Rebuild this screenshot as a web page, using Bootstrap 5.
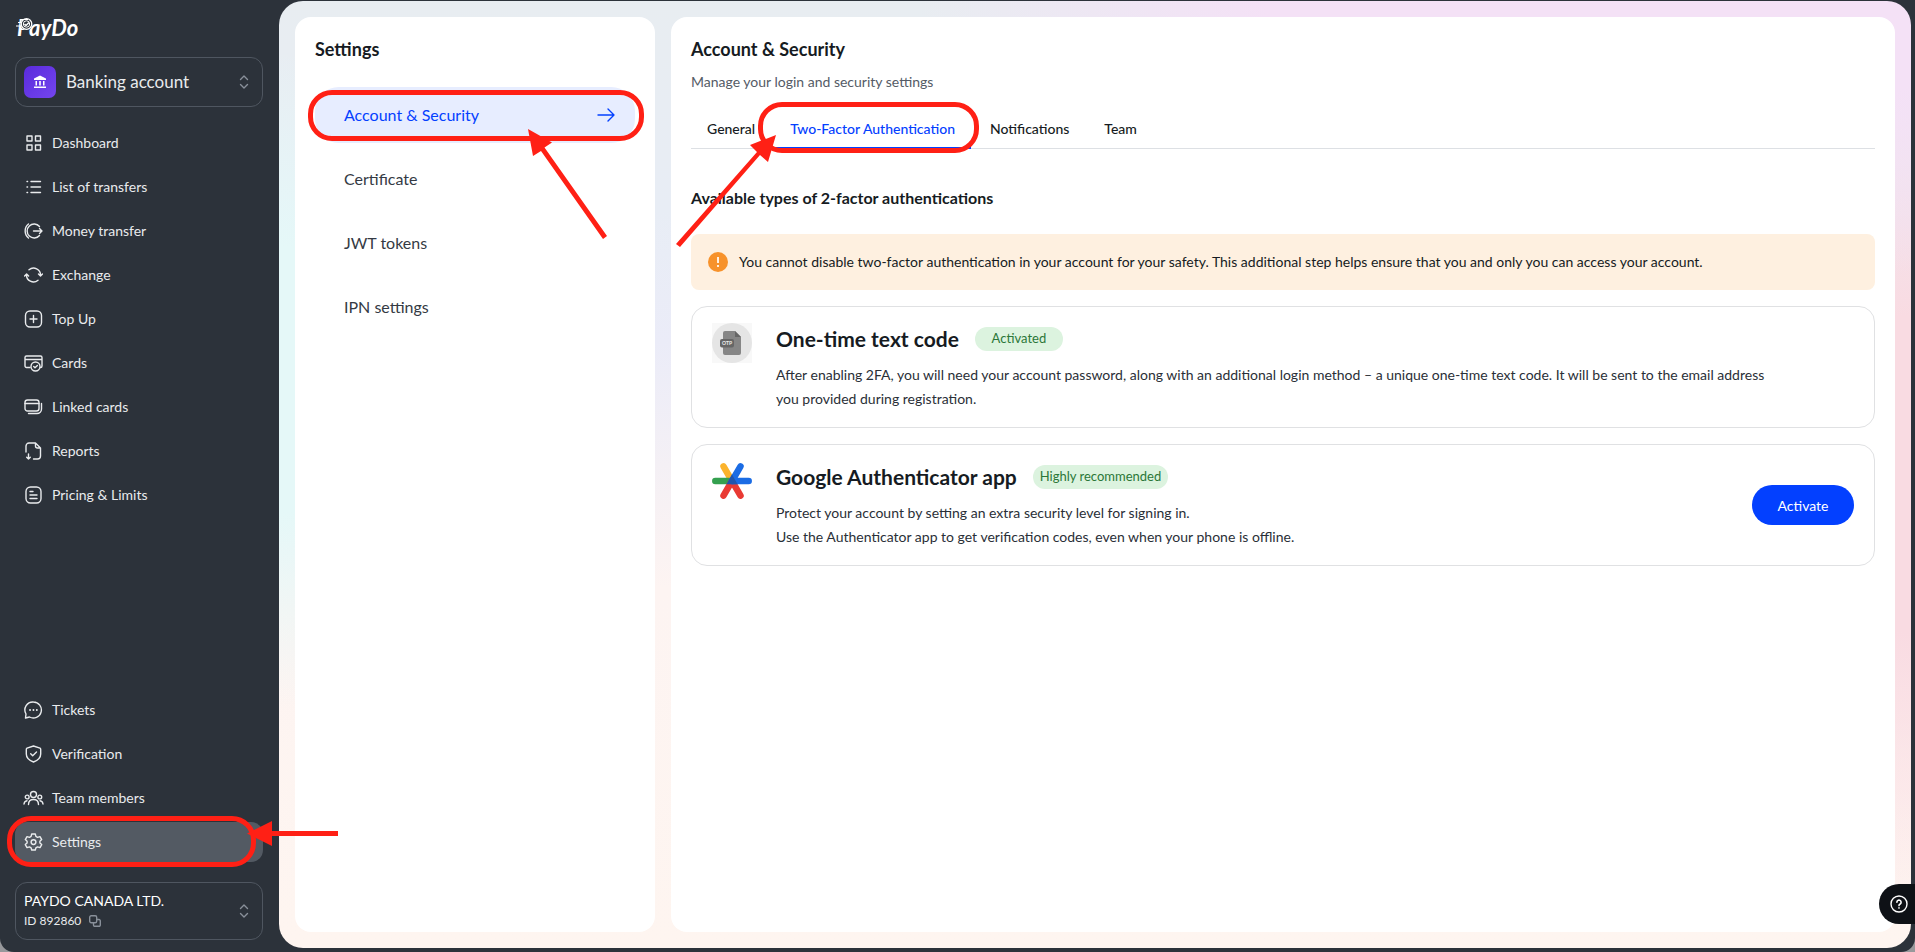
<!DOCTYPE html>
<html lang="en">
<head>
<meta charset="utf-8">
<meta name="viewport" content="width=device-width, initial-scale=1">
<title>PayDo – Account &amp; Security</title>
<link href="https://cdn.jsdelivr.net/npm/bootstrap@5.3.0/dist/css/bootstrap.min.css" rel="stylesheet">
<style>
  :root { --ink: #161b22; --side: #2c323a; --blue: #0340ff; --mark: #ff2015; }
  body { font-family: Lato, "Open Sans", sans-serif; font-size: 14px; line-height: 24px; color: var(--ink); background: #97989b; }
  svg { display: block; flex: none; }
  .line-icon { fill: none; stroke: currentColor; stroke-width: 1.4; stroke-linecap: round; stroke-linejoin: round; }
  .app-frame { background: var(--side); border-radius: 0 0 14px 14px; padding: 1px 4px 4px 0; }

  .side-bar { width: 279px; flex: none; padding: 11px 16px 8px 15px; color: #e9ebed; }
  .brand-logo { margin-bottom: 15px; }
  .switch-box { border: 1px solid #4f5660; border-radius: 12px; background: none; color: inherit; text-align: left; padding: 0 13px 0 8px; gap: 10px; }
  .switch-account { height: 50px; font-size: 17px; margin-bottom: 16px; }
  .switch-company { height: 58px; margin-top: 20px; line-height: 20px; }
  .switch-box .arrows { color: #89909a; }
  .bank-tile { width: 32px; height: 32px; border-radius: 7px; background: linear-gradient(135deg, #5a2bdc, #7445ee); }
  .company-name { color: #fff; }
  .company-id { font-size: 12px; }
  .side-link { height: 40px; margin-bottom: 4px; padding: 0 9px; border-radius: 12px; color: #e9ebed; text-decoration: none; gap: 9px; }
  .side-link:hover { color: #fff; }
  .side-link.active { background: #535a63; }
  .side-foot .side-link:last-child { margin-bottom: 0; }

  .stage { border-radius: 24px; padding: 16px; gap: 16px;
    background:
      radial-gradient(ellipse 700px 300px at 82% 0, #f4e1f6 50%, #f4e1f600 100%),
      radial-gradient(ellipse 500px 450px at 100% 50%, #f9dbe2 35%, #f9dbe200 100%),
      radial-gradient(ellipse 230px 330px at 0 40%, #e5f8f8 40%, #e5f8f800 100%),
      linear-gradient(180deg, #e8edf1 0, #e8edf5 22%, #ebecf8 36%, #fdf4f2 62%, #fef5f0 100%); }
  .panel { background: #fff; border-radius: 16px; padding: 20px; }
  .panel-title { font-size: 18px; line-height: 24px; font-weight: 700; margin: 0; }
  .settings-panel { width: 360px; flex: none; }
  .settings-nav { margin-top: 26px; gap: 8px; }
  .settings-nav a { height: 56px; padding: 0 20px 0 29px; border-radius: 24px; font-size: 16px; color: #343a44; text-decoration: none; }
  .settings-nav a.active { background: #e7edff; color: var(--blue); }

  .sub-title { color: #545b66; margin: 9px 0 0; }
  .tab-row { border-bottom: 1px solid #dde0e4; margin-top: 17px; gap: 3px; }
  .tab-row a { height: 38px; line-height: 36px; padding: 0 16px; font-weight: 500; color: var(--ink); text-decoration: none; margin-bottom: -1px; }
  .tab-row a.active { color: var(--blue); border-bottom: 2px solid var(--blue); }
  .section-title { font-size: 16px; line-height: 24px; font-weight: 700; margin: 37px 0 24px; }
  .safety-note { background: #fef0e0; border-radius: 8px; height: 56px; padding: 0 17px; gap: 11px; margin-bottom: 16px; }
  .method { border: 1px solid #e0e1e3; border-radius: 16px; padding: 16px 20px; min-height: 122px; margin-bottom: 16px; }
  .method-icon { margin-right: 24px; }
  .method h3 { font-size: 21px; line-height: 32px; font-weight: 700; margin: 0; }
  .method p { margin: 8px 0 0; color: #2a2f37; }
  .state-pill { background: #dcf3df; color: #2b7738; border-radius: 12px; height: 24px; line-height: 23px; font-size: 13px; font-weight: 400; padding: 0 7px; min-width: 88px; text-align: center; }
  .btn-activate { --bs-btn-color: #fff; --bs-btn-bg: var(--blue); --bs-btn-hover-color: #fff; --bs-btn-hover-bg: #0234cc; --bs-btn-border-width: 0; border-radius: 20px; height: 40px; width: 102px; font-size: 14px; }
  .help-tab { right: 0; bottom: 28px; width: 36px; height: 40px; border: 0; border-radius: 20px 0 0 20px; background: #0e1116; color: #fff; padding: 0 0 0 11px; }

  /* red call-outs lying over the interface */
  .ring { position: absolute; border: 5px solid var(--mark); border-radius: 24px; pointer-events: none; z-index: 3; }
  .pointer { position: absolute; fill: var(--mark); pointer-events: none; z-index: 3; }
  .ring-side { left: -8px; top: -6px; width: 249px; height: 51px; }
  .pointer-side { left: 232px; top: -1px; }
  .ring-nav { left: -7px; top: 3px; width: 336px; height: 51px; }
  .pointer-nav { left: 213px; top: 42px; }
  .ring-tab { left: -16px; right: -8px; top: -9px; height: 51px; }
  .pointer-tab { left: -99px; top: 24px; }
</style>
</head>
<body>
<div class="app-frame d-flex min-vh-100">

  <aside class="side-bar d-flex flex-column">
    <a href="#" class="brand-logo d-block" aria-label="PayDo">
      <svg width="72" height="30" viewBox="0 0 72 30">
        <text x="2" y="24" fill="#fff" font-family="Lato, sans-serif" font-size="22" font-weight="700" font-style="italic">PayDo</text>
        <circle cx="11.500" cy="12" r="6" fill="#2c323a"/>
        <g fill="none" stroke="#fff"><circle cx="11.500" cy="12" r="5.300" stroke-width="1.300"/><circle cx="11.500" cy="12" r="3.200" stroke-width="1"/><path d="M9.500 12l1.500 1.500 3-3" stroke-width="1.500"/><path d="M6 7.500h7M3 10.500h4M1 14h6" stroke-width="1"/></g>
      </svg>
    </a>

    <button type="button" class="switch-box switch-account d-flex align-items-center w-100">
      <span class="bank-tile d-flex align-items-center justify-content-center">
        <svg width="14" height="14" viewBox="0 0 14 14" fill="#fff"><path d="M7 .5 13 3.500V5H1V3.500zM2.500 6H4v4.500H2.500zM6.200 6h1.600v4.500H6.200zM10 6h1.500v4.500H10zM1 11.600h12V13H1z"/></svg>
      </span>
      <span class="flex-grow-1">Banking account</span>
      <svg class="arrows line-icon" width="10" height="14" viewBox="0 0 10 14"><path d="M1.500 4.500 5 1l3.500 3.500M1.500 9.500 5 13l3.500-3.500"/></svg>
    </button>

    <nav class="d-flex flex-column">
      <a class="side-link d-flex align-items-center" href="#"><svg class="line-icon" width="19" height="18" viewBox="0 0 19 18"><path d="M3 2h5v5H3zM11.500 2h5v5h-5zM3 11h5v5H3zM11.500 11h5v5h-5z"/></svg>Dashboard</a>
      <a class="side-link d-flex align-items-center" href="#"><svg class="line-icon" width="19" height="18" viewBox="0 0 19 18"><path d="M7 3.500h9.500M7 9h9.500M7 14.500h9.500M3 3.500h.6M3 9h.6M3 14.500h.6"/></svg>List of transfers</a>
      <a class="side-link d-flex align-items-center" href="#"><svg class="line-icon" width="19" height="18" viewBox="0 0 19 18"><path d="M15.500 4.500A7 7 0 1 0 15.500 13.500M9.500 9H18M15.500 6.500 18 9l-2.500 2.500M4.500 2A9 9 0 0 0 4.500 16"/></svg>Money transfer</a>
      <a class="side-link d-flex align-items-center" href="#"><svg class="line-icon" width="19" height="18" viewBox="0 0 19 18"><path d="M5 3.700A7 7 0 0 1 16.500 9.500M14.500 8l2 2 2-2M14 14.300A7 7 0 0 1 2.500 8.500M.6 10l2-2 2 2"/></svg>Exchange</a>
      <a class="side-link d-flex align-items-center" href="#"><svg class="line-icon" width="19" height="18" viewBox="0 0 19 18"><rect x="1.500" y="1" width="16" height="16" rx="4.500"/><path d="M9.500 5.500v7M6 9h7"/></svg>Top Up</a>
      <a class="side-link d-flex align-items-center" href="#"><svg class="line-icon" width="19" height="18" viewBox="0 0 19 18"><path d="M6 13.500H2.500A1.500 1.500 0 0 1 1 12V3.500A1.500 1.500 0 0 1 2.500 2h14A1.500 1.500 0 0 1 18 3.500V12a1.500 1.500 0 0 1-1.500 1.500M1 5.500h17"/><circle cx="11.500" cy="12.500" r="4.500"/><path d="m9.700 12.500 1.300 1.300 2.400-2.400"/></svg>Cards</a>
      <a class="side-link d-flex align-items-center" href="#"><svg class="line-icon" width="19" height="18" viewBox="0 0 19 18"><rect x="1" y="2" width="14" height="11" rx="2.500"/><path d="M1 5.500h14M17.500 5.500V11a4.500 4.500 0 0 1-4.500 4.500H4.500"/></svg>Linked cards</a>
      <a class="side-link d-flex align-items-center" href="#"><svg class="line-icon" width="19" height="18" viewBox="0 0 19 18"><path d="M2 10V4a3 3 0 0 1 3-3h6.500L16.500 6v8a3 3 0 0 1-3 3H9.500M11.500 1v3a2 2 0 0 0 2 2h3M4.500 12v5M2.700 15.200l1.800 1.800 1.800-1.800"/></svg>Reports</a>
      <a class="side-link d-flex align-items-center" href="#"><svg class="line-icon" width="19" height="18" viewBox="0 0 19 18"><rect x="2" y="1" width="15" height="16" rx="4.500"/><path d="M6 5.500h3M6 9h7M6 12.500h7"/></svg>Pricing &amp; Limits</a>
    </nav>

    <nav class="side-foot d-flex flex-column mt-auto">
      <a class="side-link d-flex align-items-center" href="#"><svg class="line-icon" width="19" height="18" viewBox="0 0 19 18"><path d="M9.500 1A8 8 0 1 1 5.500 16L1.500 17 2 13A8 8 0 0 1 9.500 1z"/><path d="M6 9h.1M9.400 9h.1M12.800 9h.1" stroke-width="1.800"/></svg>Tickets</a>
      <a class="side-link d-flex align-items-center" href="#"><svg class="line-icon" width="19" height="18" viewBox="0 0 19 18"><path d="M9.500 1 16 3.200C16.500 3.500 16.700 4 16.700 4.500V9c0 4-3.200 6.500-7.200 8-4-1.500-7.200-4-7.200-8V4.500c0-.5.200-1 .7-1.300z"/><path d="m6.700 8.700 2 2L12.500 7"/></svg>Verification</a>
      <a class="side-link d-flex align-items-center" href="#"><svg class="line-icon overflow-visible" width="19" height="18" viewBox="0 0 19 18"><circle cx="9.500" cy="5.500" r="3"/><path d="M4.500 15.500c0-3.500 2-5 5-5s5 1.500 5 5"/><circle cx="3.200" cy="8" r="1.900"/><circle cx="15.800" cy="8" r="1.900"/><path d="M0 15c.2-2 1-3 3-3.300M19 15c-.2-2-1-3-3-3.300"/></svg>Team members</a>
      <a class="side-link active d-flex align-items-center position-relative" href="#" aria-current="page"><svg class="line-icon" width="19" height="18" viewBox="0 0 19 18"><path d="M7.700 1h3.600l.6 2.400 1.600.9L16 3.600l1.700 3-1.800 1.700v1.600l1.800 1.700-1.700 3-2.500-.7-1.600.9-.6 2.200H7.700l-.6-2.200-1.600-.9-2.500.7-1.700-3 1.800-1.700V8.300L1.300 6.600l1.700-3 2.500.7 1.600-.9z"/><circle cx="9.500" cy="9.100" r="2.400"/></svg>Settings
        <span class="ring ring-side"></span>
        <svg class="pointer pointer-side" width="92" height="26" viewBox="0 0 92 26"><path d="M0 12.500 25 0v10h66v5H25v10z"/></svg>
      </a>
    </nav>

    <button type="button" class="switch-box switch-company d-flex align-items-center w-100">
      <span class="flex-grow-1">
        <span class="company-name d-block">PAYDO CANADA LTD.</span>
        <span class="company-id d-flex align-items-center gap-2">ID 892860
          <svg class="line-icon arrows" width="12" height="12" viewBox="0 0 12 12"><rect x=".7" y=".7" width="7" height="7" rx="1.500"/><path d="M8 4.500h2A1.300 1.300 0 0 1 11.300 5.800V10A1.300 1.300 0 0 1 10 11.300H5.800A1.300 1.300 0 0 1 4.500 10V8"/></svg>
        </span>
      </span>
      <svg class="arrows line-icon" width="10" height="14" viewBox="0 0 10 14"><path d="M1.500 4.500 5 1l3.500 3.500M1.500 9.500 5 13l3.500-3.500"/></svg>
    </button>
  </aside>

  <div class="stage d-flex flex-grow-1">
    <section class="panel settings-panel">
      <h1 class="panel-title">Settings</h1>
      <nav class="settings-nav d-flex flex-column">
        <a class="active d-flex align-items-center justify-content-between position-relative" href="#" aria-current="page">Account &amp; Security
          <svg class="line-icon" width="18" height="16" viewBox="0 0 18 16"><path d="M1 8h16M11 2l6 6-6 6"/></svg>
          <span class="ring ring-nav"></span>
          <svg class="pointer pointer-nav" width="80" height="112" viewBox="0 0 80 112"><path d="M0 0 24 13.500 16.500 18.500 79 107 75 110 13 22 5 27z"/></svg>
        </a>
        <a class="d-flex align-items-center" href="#">Certificate</a>
        <a class="d-flex align-items-center" href="#">JWT tokens</a>
        <a class="d-flex align-items-center" href="#">IPN settings</a>
      </nav>
    </section>

    <main class="panel flex-grow-1">
      <h2 class="panel-title">Account &amp; Security</h2>
      <p class="sub-title">Manage your login and security settings</p>
      <nav class="tab-row d-flex">
        <a href="#">General</a>
        <a href="#" class="active position-relative" aria-current="page">Two-Factor Authentication
          <span class="ring ring-tab"></span>
          <svg class="pointer pointer-tab" width="102" height="113" viewBox="0 0 102 113"><path d="M101 0 75 10 82 17 1 109 5 112 85 20 93 27z"/></svg>
        </a>
        <a href="#">Notifications</a>
        <a href="#">Team</a>
      </nav>

      <h3 class="section-title">Available types of 2-factor authentications</h3>
      <div class="safety-note d-flex align-items-center">
        <svg width="20" height="20" viewBox="0 0 20 20"><circle cx="10" cy="10" r="10" fill="#f7922b"/><path d="M10 5v6M10 13v2" stroke="#fff0e0" stroke-width="2" fill="none"/></svg>
        <span>You cannot disable two-factor authentication in your account for your safety. This additional step helps ensure that you and only you can access your account.</span>
      </div>

      <article class="method d-flex">
        <svg class="method-icon" width="40" height="40" viewBox="0 0 40 40"><path fill="#f8f8f8" d="M0 0h40v40H0z"/><circle cx="20" cy="20" r="20" fill="#e5e5e5"/><path fill="#868686" d="M13 8h10l6 6v16a2 2 0 0 1-2 2H13a2 2 0 0 1-2-2V10a2 2 0 0 1 2-2z"/><path fill="#666" d="M23 8l6 6h-6z"/><rect x="8" y="16" width="14" height="8.500" rx="2" fill="#666"/><text x="15" y="22" text-anchor="middle" font-family="Lato, sans-serif" font-size="5" font-weight="700" fill="#eee">OTP</text></svg>
        <div class="flex-grow-1 me-5">
          <div class="d-flex align-items-center gap-3">
            <h3>One-time text code</h3><span class="state-pill">Activated</span>
          </div>
          <p>After enabling 2FA, you will need your account password, along with an additional login method – a unique one-time text code. It will be sent to the email address<br>you provided during registration.</p>
        </div>
      </article>

      <article class="method d-flex">
        <svg class="method-icon" width="40" height="40" viewBox="0 0 40 40" stroke-width="6.500" stroke-linecap="round">
          <path d="M20 20 11.500 5.300" stroke="#fbb32c"/><path d="M20 20 3.300 20" stroke="#34a04f"/>
          <path d="M20 20 11.500 34.700M20 20 28.500 34.700" stroke="#e93a33"/><path d="M20 20 28.500 5.300M20 20h16.700" stroke="#1b6ce4"/>
          <path d="M20 13.500 25.600 23.200H14.400z" fill="#2055ad"/>
        </svg>
        <div class="flex-grow-1 me-4">
          <div class="d-flex align-items-center gap-3">
            <h3>Google Authenticator app</h3><span class="state-pill">Highly recommended</span>
          </div>
          <p>Protect your account by setting an extra security level for signing in.<br>Use the Authenticator app to get verification codes, even when your phone is offline.</p>
        </div>
        <button type="button" class="btn btn-activate align-self-center">Activate</button>
      </article>
    </main>
  </div>
</div>

<button type="button" class="help-tab position-fixed d-flex align-items-center" aria-label="Help">
  <svg class="line-icon" width="18" height="18" viewBox="0 0 18 18"><circle cx="9" cy="9" r="8"/><path d="M6.900 7.200a2.100 2.100 0 1 1 3.200 1.800c-.7.400-1.100.8-1.100 1.600M9 12.900v.2" stroke-width="1.600"/></svg>
</button>
<script src="https://cdn.jsdelivr.net/npm/bootstrap@5.3.0/dist/js/bootstrap.bundle.min.js"></script>
</body>
</html>
